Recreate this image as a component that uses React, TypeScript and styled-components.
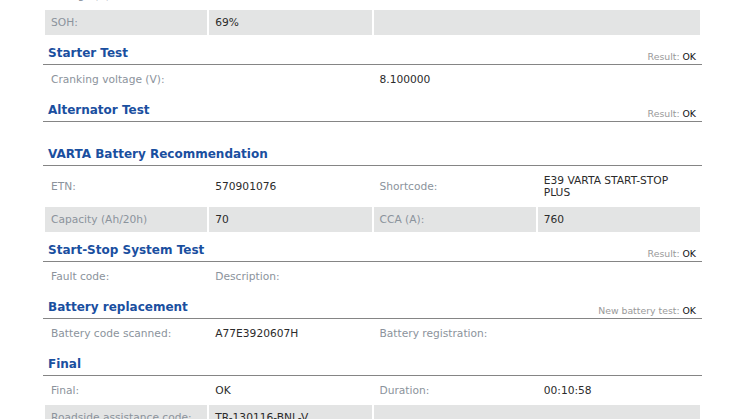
import React from "react";
import styled, { createGlobalStyle } from "styled-components";

const GlobalStyle = createGlobalStyle`
	html, body {
		margin: 0;
		padding: 0;
		background: #ffffff;
		overflow: hidden;
	}
	body {
		font-family: "DejaVu Sans", Verdana, sans-serif;
	}
`;

const Page = styled.div`
	width: 659px;
	margin: -19px 0 0 43px;
`;

const Grid = styled.div`
	display: grid;
	grid-template-columns: repeat(4, 1fr);
	gap: 2px;
	padding: 2px;
`;

const Empty = styled.div`
	height: 16px;
`;

const Cell = styled.div<{ $span?: number; $shade?: boolean; $kind?: "label" | "value" }>`
	grid-column: span ${(p) => p.$span || 1};
	display: flex;
	align-items: center;
	background: ${(p) => (p.$shade ? "#e3e4e4" : "transparent")};
	color: ${(p) => (p.$kind === "value" ? "#2b2b2b" : "#8b939c")};
	font-size: 10.67px;
	line-height: 12px;
	padding: 6.5px 5px 6.5px 6px;
	min-height: 12px;
`;

const Heading = styled.div`
	display: flex;
	justify-content: space-between;
	align-items: flex-end;
	height: 28px;
	box-sizing: border-box;
	border-bottom: 1px solid #858585;
	padding: 0 6px 0 5px;
`;

const Title = styled.h3`
	margin: 0;
	padding-bottom: 4px;
	font-size: 12px;
	line-height: 14px;
	font-weight: bold;
	color: #1a4f9f;
`;

const Result = styled.span`
	font-size: 9.33px;
	line-height: 12px;
	padding-bottom: 1px;
	color: #999999;
	b {
		font-weight: normal;
		color: #111111;
	}
`;

type Item = [string, string?, number?];
type Row = { shade?: boolean; cells: { text: string; kind: "label" | "value"; span?: number }[] };

const row = (shade: boolean, ...pairs: Item[]): Row => ({
	shade,
	cells: pairs.map(([text, kind, span]) => ({
		text,
		kind: (kind as "label" | "value") || "label",
		span,
	})),
});

type Section = { title?: string; result?: [string, string]; rows: Row[] };

const sections: Section[] = [
	{
		rows: [
			row(false, ["Voltage (V):"], ["12.63", "value"], ["SOC:"], ["80%", "value"]),
			row(true, ["SOH:"], ["69%", "value"], ["", "label", 2]),
		],
	},
	{
		title: "Starter Test",
		result: ["Result:", "OK"],
		rows: [row(false, ["Cranking voltage (V):", "label", 2], ["8.100000", "value", 2])],
	},
	{
		title: "Alternator Test",
		result: ["Result:", "OK"],
		rows: [],
	},
	{
		title: "VARTA Battery Recommendation",
		rows: [
			row(false, ["ETN:"], ["570901076", "value"], ["Shortcode:"], ["E39 VARTA START-STOP PLUS", "value"]),
			row(true, ["Capacity (Ah/20h)"], ["70", "value"], ["CCA (A):"], ["760", "value"]),
		],
	},
	{
		title: "Start-Stop System Test",
		result: ["Result:", "OK"],
		rows: [row(false, ["Fault code:"], ["Description:", "label", 3])],
	},
	{
		title: "Battery replacement",
		result: ["New battery test:", "OK"],
		rows: [row(false, ["Battery code scanned:"], ["A77E3920607H", "value"], ["Battery registration:", "label", 2])],
	},
	{
		title: "Final",
		rows: [
			row(false, ["Final:"], ["OK", "value"], ["Duration:"], ["00:10:58", "value"]),
			row(true, ["Roadside assistance code:"], ["TR-130116-BNL-V", "value"], ["", "label", 2]),
		],
	},
];

const App = () => {
	return (
		<>
			<GlobalStyle />
			<Page>
				{sections.map((s, i) => (
					<section key={i}>
						{s.title && (
							<Heading>
								<Title>{s.title}</Title>
								{s.result && (
									<Result>
										{s.result[0]} <b>{s.result[1]}</b>
									</Result>
								)}
							</Heading>
						)}
						{s.rows.length ? (
							<Grid>
								{s.rows.map((r, j) =>
									r.cells.map((c, k) => (
										<Cell key={`${j}-${k}`} $span={c.span} $shade={r.shade} $kind={c.kind}>
											{c.text}
										</Cell>
									))
								)}
							</Grid>
						) : (
							<Empty />
						)}
					</section>
				))}
			</Page>
		</>
	);
};

export default App;
